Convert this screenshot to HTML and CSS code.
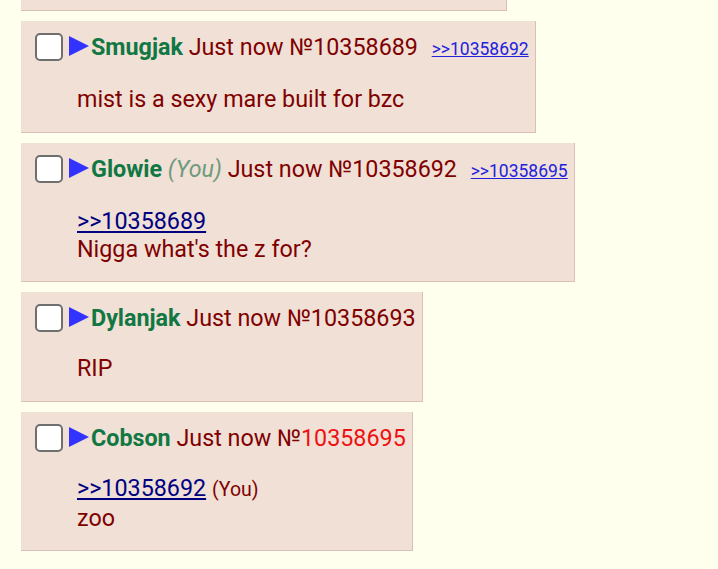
FILE: index.html
```html
<!DOCTYPE html>
<html lang="en">
<head>
  <meta charset="UTF-8">
  <title>Thread</title>
  <link rel="stylesheet" href="styles.css">
</head>
<body>

<div class="thread">
  <div class="post post-cut"></div>

  <div class="post">
    <div class="post-info">
      <input type="checkbox" class="post-check"><span class="arrow"></span><span class="name">Smugjak</span>
      <span class="time">Just now</span>
      <span class="num">№10358689</span>
      <a class="backlink" href="#p10358692">&gt;&gt;10358692</a>
    </div>
    <blockquote class="post-msg">mist is a sexy mare built for bzc</blockquote>
  </div>

  <div class="post">
    <div class="post-info">
      <input type="checkbox" class="post-check"><span class="arrow"></span><span class="name">Glowie</span>
      <span class="you">(You)</span>
      <span class="time">Just now</span>
      <span class="num">№10358692</span>
      <a class="backlink" href="#p10358695">&gt;&gt;10358695</a>
    </div>
    <blockquote class="post-msg"><a class="quotelink" href="#p10358689">&gt;&gt;10358689</a><br>Nigga what's the z for?</blockquote>
  </div>

  <div class="post">
    <div class="post-info">
      <input type="checkbox" class="post-check"><span class="arrow"></span><span class="name">Dylanjak</span>
      <span class="time">Just now</span>
      <span class="num">№10358693</span>
    </div>
    <blockquote class="post-msg">RIP</blockquote>
  </div>

  <div class="post">
    <div class="post-info">
      <input type="checkbox" class="post-check"><span class="arrow"></span><span class="name">Cobson</span>
      <span class="time">Just now</span>
      <span class="num">№<span class="num-new">10358695</span></span>
    </div>
    <blockquote class="post-msg"><a class="quotelink" href="#p10358692">&gt;&gt;10358692</a> <span class="quote-you">(You)</span><br>zoo</blockquote>
  </div>
</div>

</body>
</html>
```

FILE: styles.css
```css
html, body {
  margin: 0;
  padding: 0;
  background: #ffffee;
  color: #800000;
  font-family: Roboto, 'Liberation Sans', Arial, sans-serif;
}

.thread {
  display: flex;
  flex-direction: column;
  align-items: flex-start;
  gap: 10px;
  padding-left: 21px;
}

.post {
  background: #f0e0d6;
  border-right: 1px solid #d9bfb7;
  border-bottom: 1px solid #d9bfb7;
  padding: 12px 6px 18.5px 14px;
}
.post-cut {
  width: 485px;
  height: 10px;
  padding: 0;
}

.post-info {
  font-size: 23.3px;
  line-height: 28px;
  white-space: nowrap;
}
.post-check {
  appearance: none;
  -webkit-appearance: none;
  width: 28px;
  height: 28px;
  margin: 0 6px 0 0;
  box-sizing: border-box;
  border: 2px solid #6f6f6f;
  border-radius: 5px;
  background: #fff;
  vertical-align: top;
}
.arrow {
  display: inline-block;
  width: 0;
  height: 0;
  border-top: 10px solid transparent;
  border-bottom: 10px solid transparent;
  border-left: 20px solid #3333ff;
  margin: 3px 2px 0 0;
  vertical-align: top;
}
.name {
  color: #117743;
  font-weight: 700;
}
.you {
  color: #6f9a7c;
  font-style: italic;
}
.num-new { color: #ee1111; }
.backlink {
  font-size: 17.5px;
  color: #2222dd;
  margin-left: 8px;
}

.post-msg {
  margin: 22px 0 0 42px;
  font-size: 23.3px;
  line-height: 28px;
}
.quotelink {
  color: #000080;
}
.quote-you {
  font-size: 19.5px;
}
```
